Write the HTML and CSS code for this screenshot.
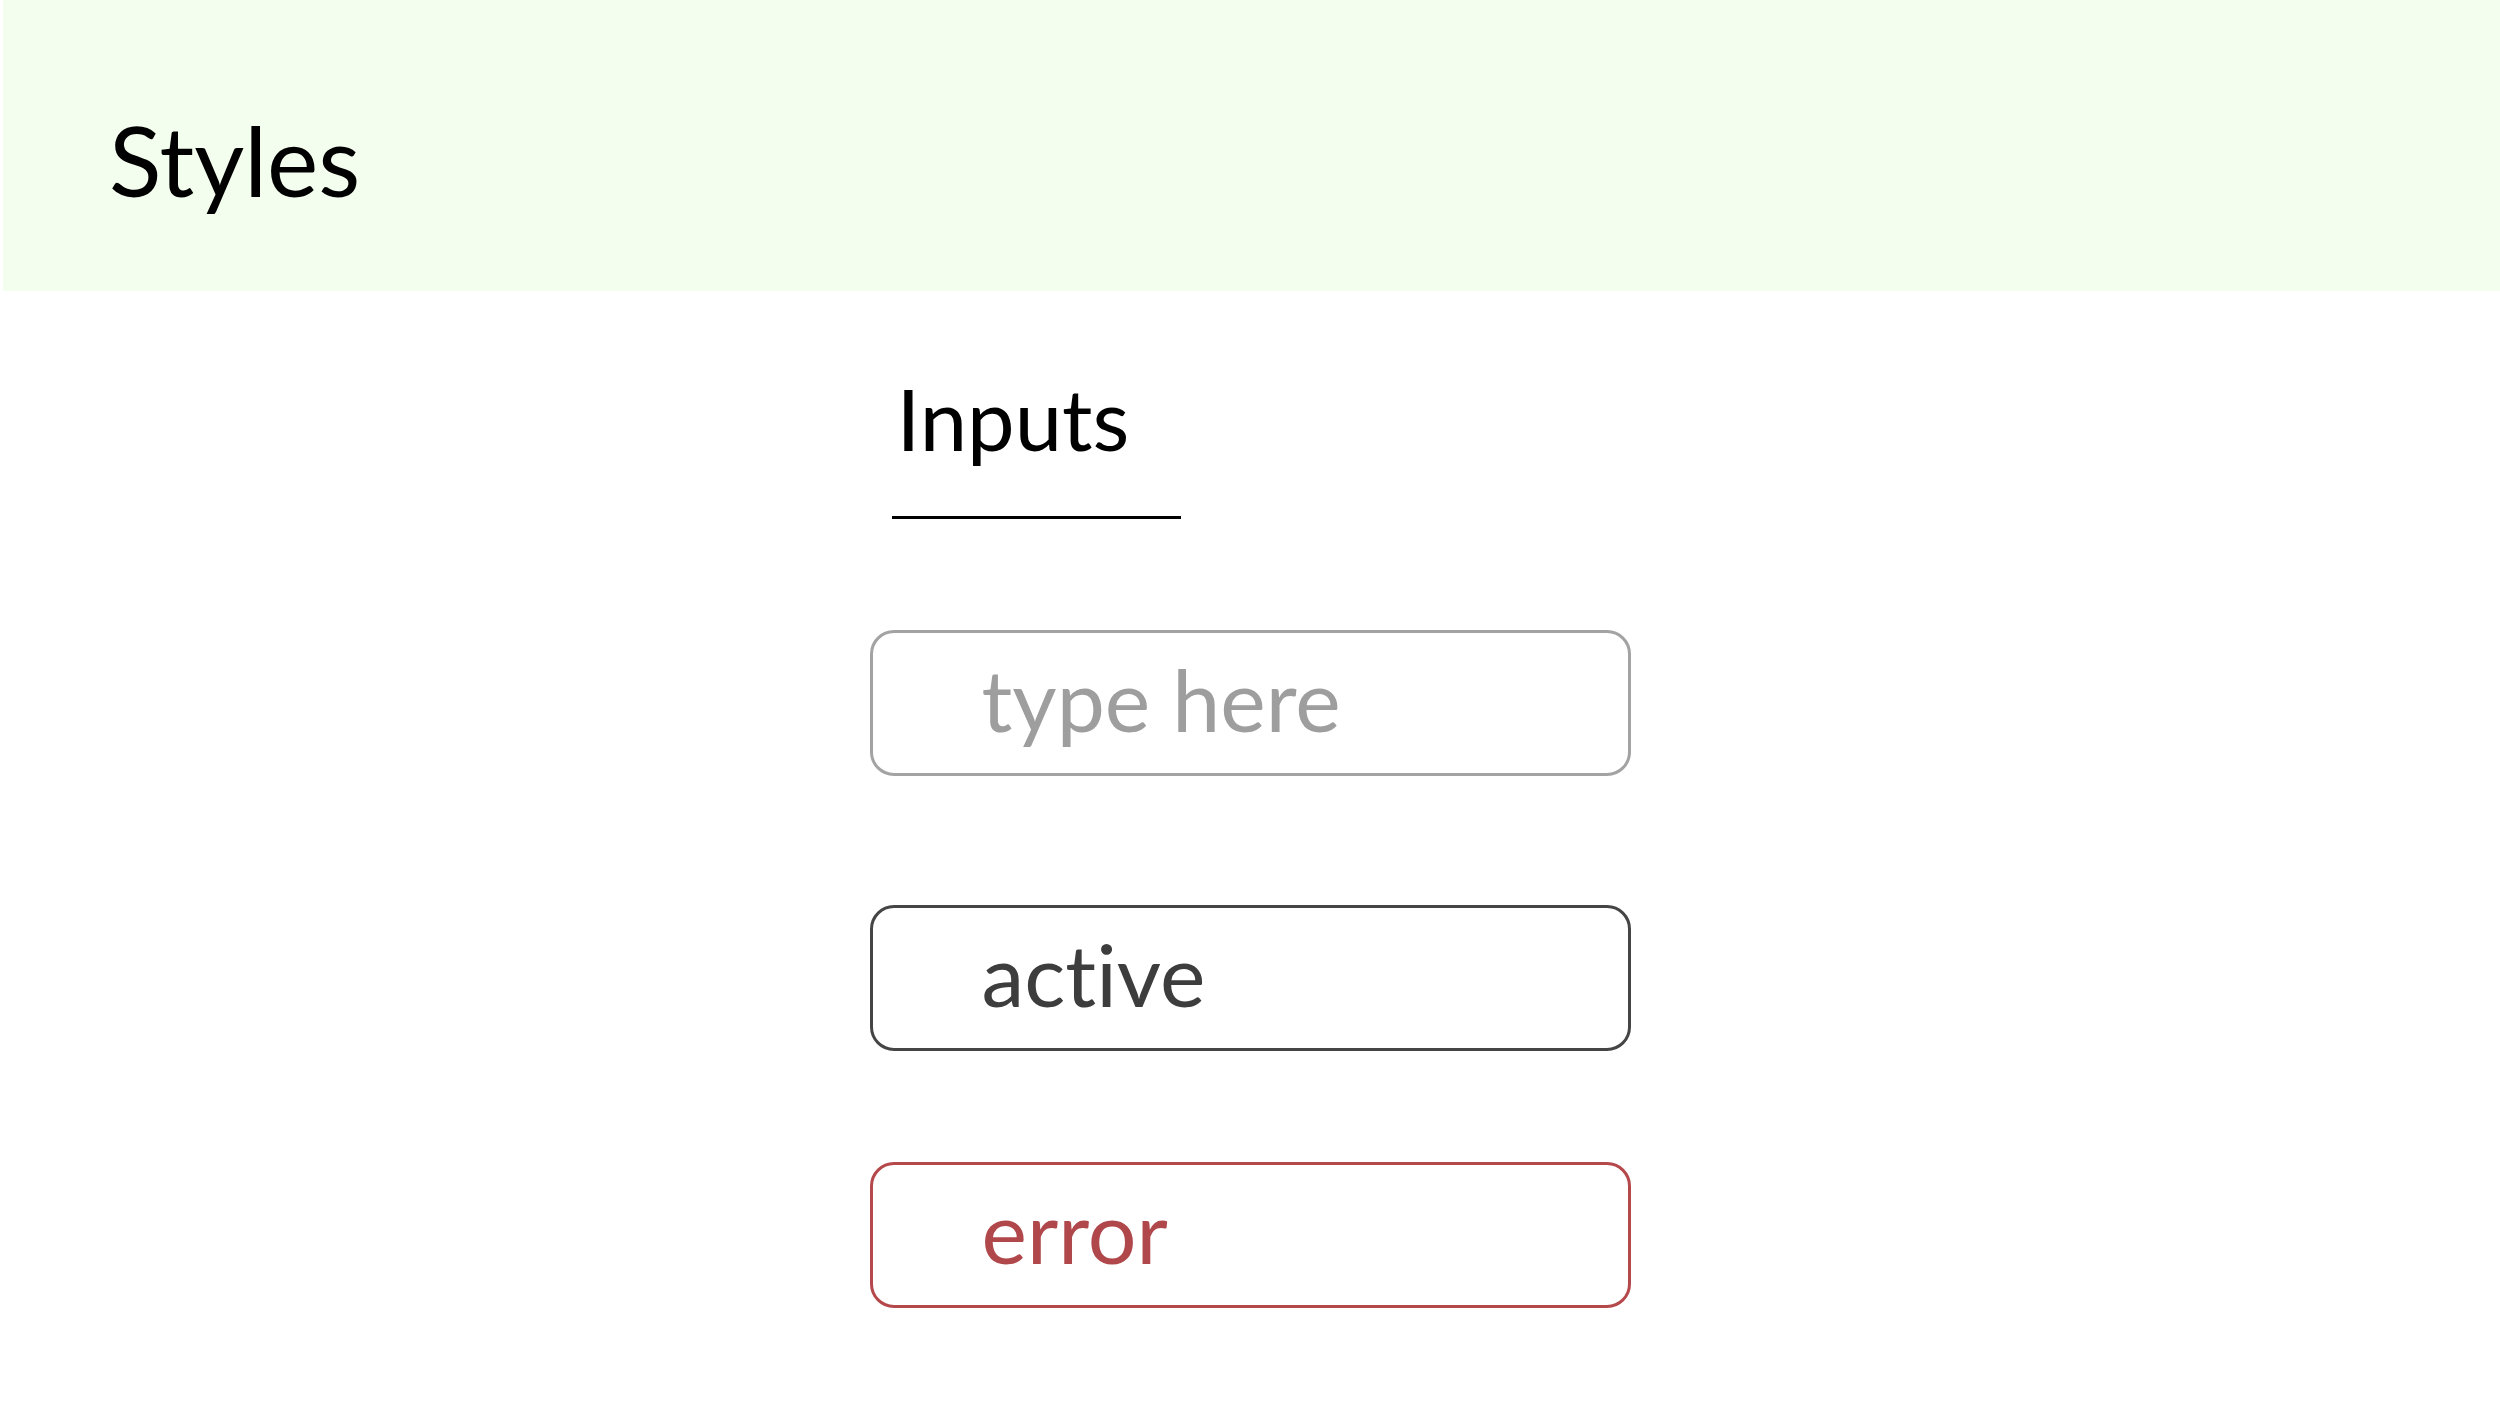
FILE: index.html
```html
<!DOCTYPE html>
<html lang="en">
<head>
    <meta charset="UTF-8">
    <meta name="viewport" content="width=device-width, initial-scale=1.0">
    <title>Styles</title>
    <link rel="stylesheet" href="styles.css">
</head>
<body>
    <header class="page-header">
        <h1>Styles</h1>
    </header>

    <main class="content">
        <section class="group">
            <h2 class="group-title">Inputs</h2>
            <div class="field-list">
                <input class="field" type="text" placeholder="type here">
                <input class="field field-active" type="text" value="active">
                <input class="field field-error" type="text" value="error">
            </div>
        </section>
    </main>
</body>
</html>
```

FILE: styles.css
```css
body {
    margin: 0;
    font-family: Lato, "Noto Sans", sans-serif;
    font-variant-ligatures: none;
    background-color: #fff;
    color: #000;
}
.page-header {
    margin-left: 3px;
    height: 291px;
    box-sizing: border-box;
    padding: 102px 0 0 106px;
    background-color: #f4feee;
}
.page-header h1 {
    margin: 0;
    font-size: 97px;
    font-weight: 400;
    line-height: 1.2;
}
.content {
    width: 761px;
    margin: 0 auto;
}
.group-title {
    width: 289px;
    box-sizing: border-box;
    margin: 76px 0 0 22px;
    padding: 0 0 47px 5px;
    border-bottom: 3px solid #000;
    font-size: 85px;
    font-weight: 400;
    line-height: 1.2;
}
.field-list {
    display: flex;
    flex-direction: column;
    margin-top: 111px;
}
.field {
    box-sizing: border-box;
    width: 100%;
    height: 146px;
    margin: 0;
    padding: 13px 20px 22px 109px;
    border: 3px solid #a3a3a3;
    border-radius: 24px;
    background: #fff;
    font-family: inherit;
    font-variant-ligatures: none;
    font-size: 86px;
    line-height: 1.2;
    color: #3d3d3d;
    outline: none;
}
.field::placeholder {
    color: #9e9e9e;
    opacity: 1;
}
.field-active {
    margin-top: 129px;
    border-color: #454545;
}
.field-error {
    margin-top: 111px;
    border-color: #b5484b;
    color: #b0474a;
}
```
